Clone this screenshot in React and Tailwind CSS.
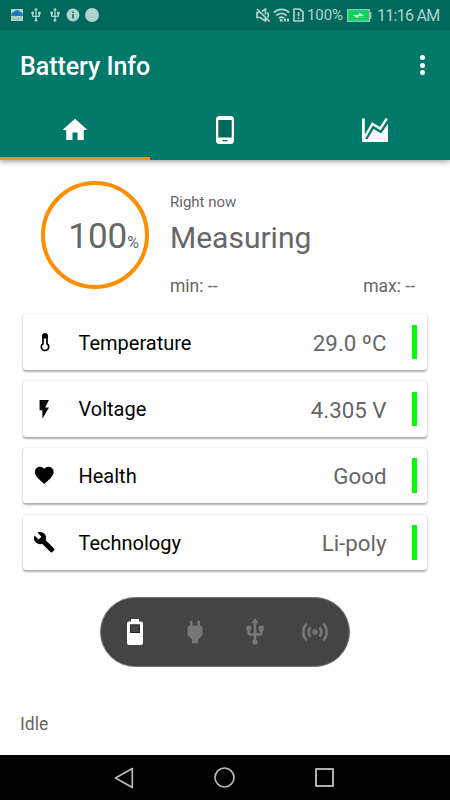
import React from 'react';

const HOME = 'M10 20v-6h4v6h5v-8h3L12 3 2 12h3v8z';
const BOLT = 'M7 2v11h3v9l7-12h-4l4-8z';
const HEART =
  'M12 21.35l-1.45-1.32C5.4 15.36 2 12.28 2 8.5 2 5.42 4.42 3 7.5 3c1.74 0 3.41.81 4.5 2.09C13.09 3.81 14.76 3 16.5 3 19.58 3 22 5.42 22 8.5c0 3.78-3.4 6.86-8.55 11.54L12 21.35z';
const WRENCH =
  'M22.7 19l-9.1-9.1c.9-2.3.4-5-1.5-6.9-2-2-5-2.4-7.4-1.3L9 6 6 9 1.6 4.7C.4 7.1.9 10.1 2.9 12.1c1.9 1.9 4.6 2.4 6.9 1.5l9.1 9.1c.4.4 1 .4 1.4 0l2.3-2.3c.5-.4.5-1.1.1-1.4z';
const PLUG =
  'M16.01 7L16 3h-2v4h-4V3H8v4h-.01C7 6.99 6 7.99 6 8.99v5.49L9.5 18v3h5v-3l3.5-3.51v-5.5c0-1-1-2-1.99-1.99z';
const USB =
  'M15 7v4h1v2h-3V5h2l-3-4-3 4h2v8H8v-2.07c.7-.37 1.2-1.08 1.2-1.93 0-1.21-.99-2.2-2.2-2.2-1.21 0-2.2.99-2.2 2.2 0 .85.5 1.56 1.2 1.93V13c0 1.11.89 2 2 2h3v3.05c-.71.37-1.2 1.1-1.2 1.95 0 1.22.99 2.2 2.2 2.2 1.21 0 2.2-.98 2.2-2.2 0-.85-.49-1.58-1.2-1.95V15h3c1.11 0 2-.89 2-2v-2h1V7h-4z';

function Icon({ path, className }) {
  return (
    <svg viewBox="0 0 24 24" fill="currentColor" className={className}>
      <path d={path} />
    </svg>
  );
}

function Thermometer() {
  return (
    <svg viewBox="0 0 10 19" className="w-[10px] h-[19px]">
      <path
        d="M3 10.7V3a2 2 0 0 1 4 0v7.7a3.7 3.7 0 1 1-4 0z"
        fill="none"
        stroke="currentColor"
        strokeWidth="1.7"
      />
      <path d="M2.3 5.5V3a2.7 2.7 0 0 1 5.4 0v2.5z" fill="currentColor" />
    </svg>
  );
}

function StatusBar() {
  return (
    <div className="h-[30px] bg-[#00695c] text-[#b2d2ce] flex items-center justify-between pl-[11px] pr-[11px]">
      <div className="flex items-center">
        {/* Weather notification */}
        <svg viewBox="0 0 12 12" className="w-3 h-3">
          <rect width="12" height="12" fill="#b2d2ce" />
          <path d="M.5 7C-.5 4.500 1.500 3 3 3c1-2.500 5-2.500 6 0 2 0 3.500 2 2.500 4z" fill="#1b79c0" />
          <path d="M2.500 8v3M5 7.500v3M7.500 8v3M10 7.500v3" stroke="#8ea9ad" strokeWidth=".8" />
        </svg>
        <Icon path={USB} className="w-4 h-4 ml-[4.5px]" />
        <Icon path={USB} className="w-4 h-4 ml-[3px]" />
        <svg viewBox="0 0 14 14" className="w-[14px] h-[14px] ml-[3.5px]">
          <circle cx="7" cy="7" r="6.400" fill="currentColor" />
          <path d="M7 3.500v1.500M7 6v4.500" stroke="#00695c" strokeWidth="1.500" />
        </svg>
        <span className="w-[14px] h-[14px] rounded-full bg-[#b2d2ce] ml-[5px]" />
      </div>
      <div className="flex items-center">
        {/* Muted speaker */}
        <svg viewBox="0 0 14 14" className="w-[14px] h-[14px]" fill="none" stroke="currentColor" strokeWidth="1.700">
          <path d="M1 1l12.500 12.500M3.500 4.500H1v5h3L9.500 13V9.500M6 3.500L9.500 1v5.500M11.500 4.500c1 1.500 1 3.500.2 5" />
        </svg>
        <svg viewBox="0 0 17 14" className="w-[17px] h-[14px] ml-[3px]" fill="none" stroke="currentColor" strokeWidth="1.800">
          <path d="M.8 4.500C5.500.3 11.500.3 16.200 4.500M3.300 7.600c3-3 7.400-3 10.400 0M6 10.200c1.500-1.500 3.500-1.500 5 0" />
          <circle cx="8.200" cy="12.200" r="1.500" fill="currentColor" stroke="none" />
          <path d="M11 12h5.500" strokeDasharray="2 1" strokeWidth="2.800" />
        </svg>
        <svg viewBox="0 0 11 14" className="w-[11px] h-[14px] ml-[3px]" fill="none" stroke="currentColor" strokeWidth="1.700">
          <path d="M1 1h5.500L10 4v9H1z" strokeLinejoin="round" />
          <path d="M5.500 4.300v4M5.500 9.500v1.600" strokeWidth="1.800" />
        </svg>
        <span className="text-[15px] leading-none ml-[3px] w-[40px] tracking-[-0.1px] whitespace-nowrap">100%</span>
        <svg viewBox="0 0 26 13" className="w-[26px] h-[13px] shrink-0">
          <rect x=".7" y=".7" width="21.600" height="11.600" fill="#00d659" stroke="#9dbfba" strokeWidth="1.300" />
          <path d="M23.500 3v7" fill="none" stroke="#9dbfba" strokeWidth="2" />
          <path d="M6 6l6-.3V3.500L17 7l-6 .3v2.200z" fill="#e8fff0" />
        </svg>
        <span className="text-[16px] leading-none tracking-[-0.7px] pt-px ml-[4px] w-[62px] whitespace-nowrap">11:16 AM</span>
      </div>
    </div>
  );
}

function Header() {
  return (
    <header className="relative h-[130px] bg-[#00796b] text-white shadow-[0_2px_5px_rgba(0,0,0,0.35)] flex flex-col">
      <div className="h-[70px] flex items-center justify-between pl-5 pr-[25px] pt-[2px]">
        <h1 className="text-[25px] font-medium leading-none tracking-[-0.05px]">Battery Info</h1>
        <div className="flex flex-col gap-[2.5px] -mt-[2px]">
          <span className="w-[5px] h-[5px] rounded-full bg-white" />
          <span className="w-[5px] h-[5px] rounded-full bg-white" />
          <span className="w-[5px] h-[5px] rounded-full bg-white" />
        </div>
      </div>
      <nav className="grid grid-cols-3 flex-1">
        <div className="flex items-center justify-center border-b-[3px] border-[#ff8f00] pt-[3px]">
          <Icon path={HOME} className="w-[30px] h-[30px]" />
        </div>
        <div className="flex items-center justify-center">
          <svg viewBox="0 0 18 28" className="w-[18px] h-[28px]">
            <rect width="18" height="28" rx="3.500" fill="#fff" />
            <path d="M2.300 4h13.400v17.500H2.300zM6.500 24h5v1.200h-5z" fill="#00695c" />
          </svg>
        </div>
        <div className="flex items-center justify-center">
          <svg viewBox="0 0 26 24" className="w-[26px] h-[24px]">
            <path d="M0 .5h2.800v19L11 9l7.700 4.500L26 5.500V24H0z" fill="#fff" />
            <path d="M4.200 21l7-11.800 7.600 4.600L26 3.500" fill="none" stroke="#00796b" strokeWidth="2.400" />
            <path d="M3 18.500L10.400 6l7.800 4.600L24.800.5" fill="none" stroke="#fff" strokeWidth="2.400" />
          </svg>
        </div>
      </nav>
    </header>
  );
}

function Summary() {
  return (
    <section className="flex h-[154.3px] pl-[41px] pr-[35px]">
      <div className="w-[108px] h-[108px] mt-[21px] rounded-full border-4 border-[#ff8f00] flex items-baseline justify-end pr-[6px] pt-[30px]">
        <span className="text-[35px] leading-[44px]">100</span>
        <span className="text-[16px] leading-none">%</span>
      </div>
      <div className="ml-[21px] flex-1 flex flex-col">
        <span className="text-[15px] leading-[18px] mt-[33px]">Right now</span>
        <span className="text-[30px] leading-[36px] mt-[9px]">Measuring</span>
        <div className="flex justify-between text-[17.5px] leading-[20px] mt-[20px]">
          <span>min: --</span>
          <span>max: --</span>
        </div>
      </div>
    </section>
  );
}

const stats = [
  { label: 'Temperature', value: '29.0 ºC', icon: <Thermometer /> },
  { label: 'Voltage', value: '4.305 V', icon: <Icon path={BOLT} className="w-[22.5px] h-[22.5px]" /> },
  { label: 'Health', value: 'Good', icon: <Icon path={HEART} className="w-[22.5px] h-[22.5px]" /> },
  { label: 'Technology', value: 'Li-poly', icon: <Icon path={WRENCH} className="w-[22.5px] h-[22.5px]" /> },
];

function StatCard({ label, value, icon }) {
  return (
    <div className="h-[55.5px] bg-white rounded-[3px] flex items-center pr-[10.5px] shadow-[0_1.5px_2px_rgba(0,0,0,0.3),0_0_1.5px_rgba(0,0,0,0.2)]">
      <div className="w-[43px] flex justify-center text-black">{icon}</div>
      <span className="ml-[12.5px] flex-1 text-[20px] leading-[26px] pt-px text-black">{label}</span>
      <span className="text-[22.3px] leading-[28px] pt-[1.5px]">{value}</span>
      <span className="w-[4.5px] h-[34.5px] bg-[#00ff00] ml-[25.5px]" />
    </div>
  );
}

// Power sources, the active one in white
function SourceBar() {
  return (
    <div className="w-[250px] h-[70px] mx-auto mt-[26.5px] rounded-full bg-[#444444] border border-[#777777] text-[#777777] grid grid-cols-4 px-[4px] items-center justify-items-center">
      <svg viewBox="0 0 16 26" className="w-4 h-[26px]">
        <path
          d="M4 2.500V0h8v2.500h2a2 2 0 0 1 2 2V24a2 2 0 0 1-2 2H2a2 2 0 0 1-2-2V4.500a2 2 0 0 1 2-2z"
          fill="#fff"
        />
        <path d="M3 5.300h10V14H3z" fill="#222" />
        <path d="M4 6.300h8V13H4z" fill="#444" />
      </svg>
      <Icon path={PLUG} className="w-[30px] h-[30px]" />
      <Icon path={USB} className="w-[30px] h-[30px]" />
      <svg viewBox="0 0 30 30" className="w-[30px] h-[30px]" fill="none" stroke="currentColor" strokeWidth="2.500">
        <circle cx="15" cy="15" r="2.700" fill="currentColor" stroke="none" />
        <path d="M10.500 10.500a6.400 6.400 0 0 0 0 9M19.500 10.500a6.400 6.400 0 0 1 0 9M6.700 6.700a11.700 11.700 0 0 0 0 16.600M23.300 6.700a11.700 11.700 0 0 1 0 16.600" />
      </svg>
    </div>
  );
}

function NavBar() {
  return (
    <div className="h-[45px] bg-black flex items-center justify-center gap-[80px] pr-[2px]">
      <svg viewBox="0 0 20 22" className="w-5 h-[22px]" fill="none" stroke="#bababa" strokeWidth="1.700" strokeLinejoin="round">
        <path d="M1.500 11L18.300 1.500v19z" />
      </svg>
      <svg viewBox="0 0 21 21" className="w-[21px] h-[21px]" fill="none" stroke="#bababa" strokeWidth="1.700">
        <circle cx="10.500" cy="10.500" r="9.500" />
      </svg>
      <span className="w-[19px] h-[19px] rounded-[1px] border-2 border-[#b0b0b0]" />
    </div>
  );
}

export default function App() {
  return (
    <div className="w-[450px] h-[800px] overflow-hidden bg-white font-[Roboto,sans-serif] text-[#666666] flex flex-col">
      <StatusBar />
      <Header />
      <main className="flex-1">
        <Summary />
        <div className="flex flex-col gap-[11.3px] px-[23px]">
          {stats.map((s) => (
            <StatCard key={s.label} {...s} />
          ))}
        </div>
        <SourceBar />
        <p className="pl-5 mt-[46.5px] text-[17.5px] leading-[22px]">Idle</p>
      </main>
      <NavBar />
    </div>
  );
}
